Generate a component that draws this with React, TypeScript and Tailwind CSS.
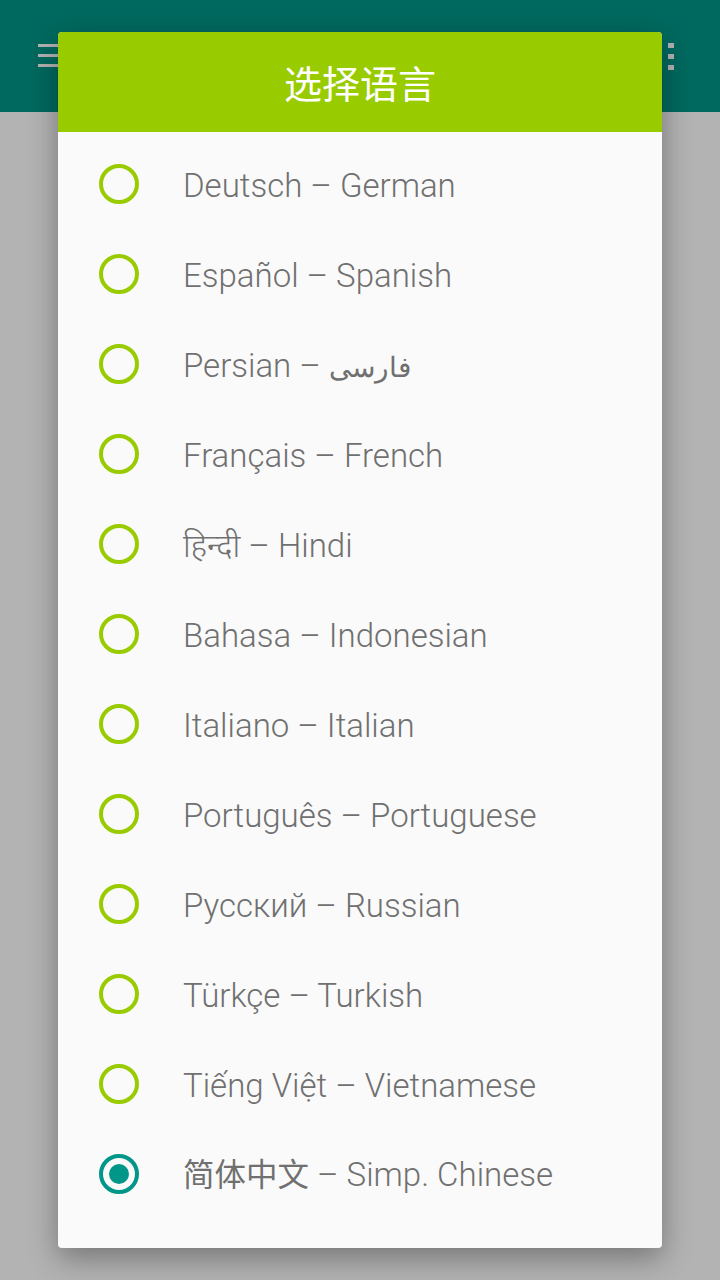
import React, { useState } from 'react';

type Lang = { native?: string; nativeCls?: string; label: string; after?: string };

const LANGS: Lang[] = [
  { label: 'Deutsch – German' },
  { label: 'Español – Spanish' },
  { label: 'Persian – ', after: 'فارسی' },
  { label: 'Français – French' },
  { native: 'हिन्दी', nativeCls: 'text-[32px]', label: ' – Hindi' },
  { label: 'Bahasa – Indonesian' },
  { label: 'Italiano – Italian' },
  { label: 'Português – Portuguese' },
  { label: 'Русский – Russian' },
  { label: 'Türkçe – Turkish' },
  { label: 'Tiếng Việt – Vietnamese' },
  { native: '简体中文', nativeCls: 'text-[31.5px] font-normal', label: ' – Simp. Chinese' },
];

const Radio: React.FC<{ checked: boolean }> = ({ checked }) => (
  <div
    className={`w-[40px] h-[40px] rounded-full border-[4px] flex items-center justify-center shrink-0 ${
      checked ? 'border-[#009688]' : 'border-[#99cc00]'
    }`}
  >
    {checked && <div className="w-[20px] h-[20px] rounded-full bg-[#009688]" />}
  </div>
);

export default function App() {
  const [selected, setSelected] = useState(11);

  return (
    <div
      className="relative w-[720px] h-[1280px] bg-[#b3b3b3] overflow-hidden"
      style={{ fontFamily: 'Roboto, "Noto Sans", "Noto Sans CJK SC", sans-serif' }}
    >
      {/* dimmed app behind */}
      <div className="h-[112px] bg-[#00695f] flex items-center justify-between pl-[38px] pr-[46px]">
        <div className="flex flex-col gap-[7px] mt-[-2px]">
          <div className="w-[24px] h-[3px] bg-[#b3b3b3]" />
          <div className="w-[24px] h-[3px] bg-[#b3b3b3]" />
          <div className="w-[24px] h-[3px] bg-[#b3b3b3]" />
        </div>
        <div className="flex flex-col gap-[6px]">
          <div className="w-[6px] h-[5px] bg-[#b3b3b3]" />
          <div className="w-[6px] h-[5px] bg-[#b3b3b3]" />
          <div className="w-[6px] h-[5px] bg-[#b3b3b3]" />
        </div>
      </div>

      {/* dialog */}
      <div className="absolute left-[58px] top-[32px] w-[604px] h-[1216px] rounded-[4px] bg-[#fafafa] overflow-hidden shadow-[0_10px_30px_rgba(0,0,0,0.35)]">
        <div className="h-[100px] bg-[#99cc00] flex items-center justify-center">
          <span className="text-white text-[38px] leading-none pt-[6px]">选择语言</span>
        </div>
        <div className="pt-[7px]">
          {LANGS.map((l, i) => (
            <div
              key={i}
              onClick={() => setSelected(i)}
              className="h-[90px] flex items-center pl-[41px] cursor-pointer"
            >
              <Radio checked={selected === i} />
              <span className="ml-[44px] pt-[2px] text-[33px] text-[#707070] font-light leading-none whitespace-nowrap">
                {l.native && <span className={l.nativeCls}>{l.native}</span>}
                {l.label}
                {l.after && <span className="text-[28px] font-normal">{l.after}</span>}
              </span>
            </div>
          ))}
        </div>
      </div>
    </div>
  );
}
